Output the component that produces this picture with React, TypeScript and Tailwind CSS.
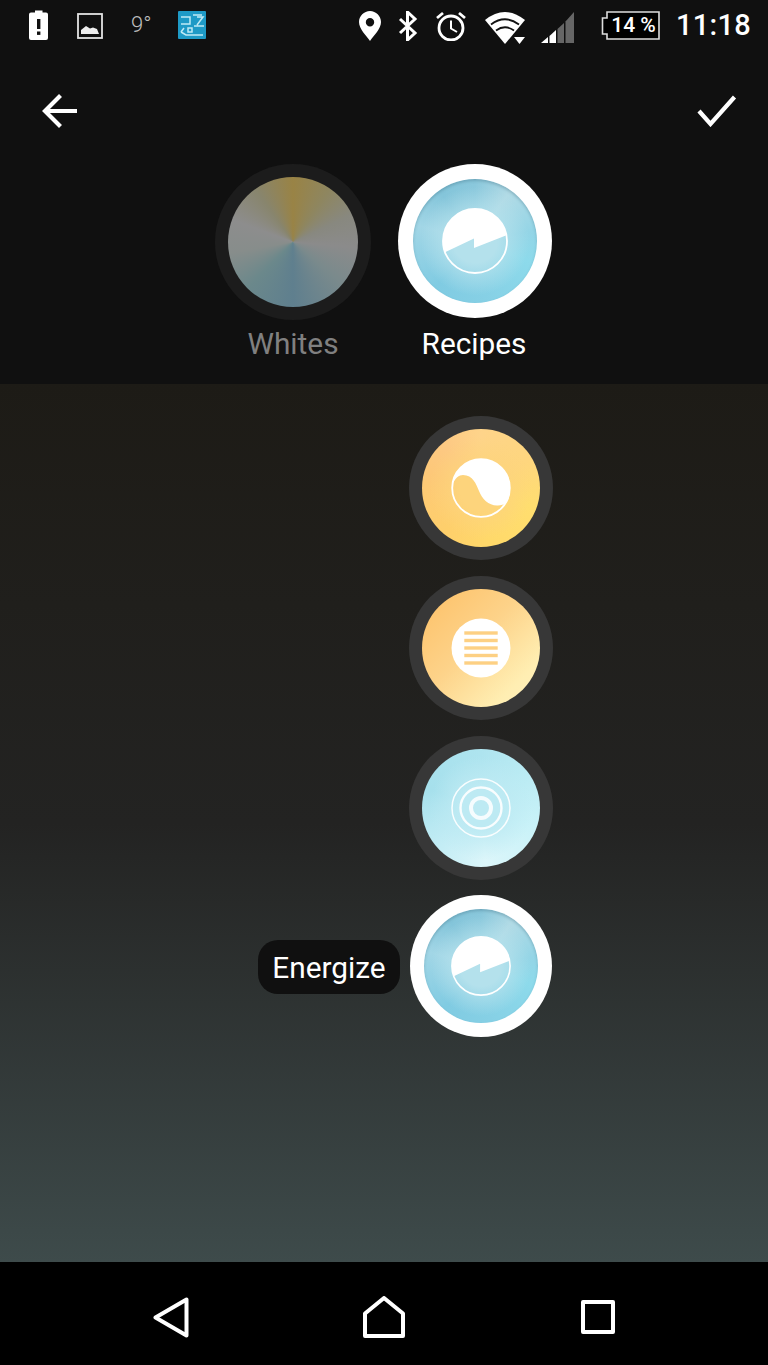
import React from 'react';

// glifos das receitas, desenhados num viewBox centrado em 0,0
const EnergizeGlyph = () => (
  <svg viewBox="-33 -33 66 66" className="w-full h-full">
    <circle cx="0" cy="0" r="32" fill="none" stroke="#fff" strokeWidth="1.8" />
    <path d="M-30 11.14 L-1 -2.5 L-1 7 L31.5 -5.64 A32 32 0 1 0 -30 11.14 Z" fill="#fff" />
  </svg>
);

const ConcentrateGlyph = () => (
  <svg viewBox="-30 -30 60 60" className="w-full h-full">
    <circle cx="0" cy="0" r="28.8" fill="none" stroke="#fff" strokeWidth="1.8" />
    <path
      d="M-28.84 -3.05 C-26 -10 -22 -13 -18 -13 C-8 -13 -5 -4 -2 3 C1 11 8 18 17 17.5 C20 17.3 23 16.5 25 14.7 A29 29 0 1 0 -28.84 -3.05 Z"
      fill="#fff"
    />
  </svg>
);

const ReadGlyph = () => (
  <svg viewBox="-30 -30 60 60" className="w-full h-full">
    <circle cx="0" cy="0" r="29.5" fill="#fff" />
    {[-16.7, -9.2, -1.7, 5.8, 13.3].map(y => (
      <rect key={y} x="-16.7" y={y} width="33.4" height="3.4" fill="#fdd083" />
    ))}
  </svg>
);

const RelaxGlyph = () => (
  <svg viewBox="-30 -30 60 60" className="w-full h-full" fill="none" stroke="#fff">
    <circle cx="0" cy="0" r="29" strokeWidth="1.5" strokeOpacity="0.9" />
    <circle cx="0" cy="0" r="20.5" strokeWidth="2.4" strokeOpacity="0.9" />
    <circle cx="0" cy="0" r="10" strokeWidth="4" strokeOpacity="0.85" />
  </svg>
);

const blueClass =
  'bg-[radial-gradient(circle,#b4e1ec_0%,#b4e1ec_25%,rgba(160,215,230,0)_62%),conic-gradient(from_0deg,#8ac8dc_0deg,#b2dbe6_35deg,#94d5e6_80deg,#8ddaeb_110deg,#86d0e5_170deg,#80cbe2_220deg,#a2d6e6_285deg,#84c5da_325deg,#8ac8dc_360deg)]';

interface RecipeCircleProps {
  selected?: boolean;
  gradient: string;
  glyph: React.ReactNode;
}

// botao redondo da lista de receitas
const RecipeCircle: React.FC<RecipeCircleProps> = ({ selected, gradient, glyph }) => (
  <div
    className={`rounded-full flex items-center justify-center shrink-0 ${
      selected ? 'w-[142px] h-[142px] bg-white' : 'w-[144px] h-[144px] bg-[#373737]'
    }`}
  >
    <div
      className={`rounded-full flex items-center justify-center ${gradient} ${
        selected ? 'w-[114px] h-[114px] shadow-[inset_0_2px_3px_rgba(60,110,130,0.35)]' : 'w-[118px] h-[118px]'
      }`}
    >
      <div className="w-[60px] h-[60px]">{glyph}</div>
    </div>
  </div>
);

const StatusBar = () => (
  <div className="h-[50px] flex items-start pt-[10px] relative shrink-0">
    <svg viewBox="0 0 20 30" className="w-[20px] h-[30px] ml-[29px]">
      <path d="M6 0.5 H13.5 V2.5 H17 Q19 2.5 19 4.5 V28 Q19 30 17 30 H2 Q0 30 0 28 V4.5 Q0 2.5 2 2.5 H6 Z" fill="#fff" />
      <rect x="8" y="9" width="3.4" height="10" fill="#111" />
      <rect x="8" y="21.5" width="3.4" height="3.4" fill="#111" />
    </svg>
    <svg viewBox="0 0 26 26" className="w-[26px] h-[26px] ml-[28px] mt-[3px]">
      <rect x="1" y="1" width="24" height="24" fill="none" stroke="#e4e4e4" strokeWidth="1.8" />
      <path d="M4 21 V17 L9 13 L13 15.5 L16 14.5 L20 16 L22 21 Z" fill="#eee" />
    </svg>
    <span className="ml-[28px] mt-[1px] w-[20px] text-[22px] leading-[28px] font-light text-[#bdbdbd] font-['Roboto',sans-serif]">
      9°
    </span>
    <svg viewBox="0 0 28 28" className="w-[28px] h-[28px] ml-[27px] mt-[1px]">
      <rect width="28" height="28" rx="1" fill="#1e9ac6" />
      <path
        d="M3 6 H12 V13 H3 M15 4 H24 M19 6 H25 L19 14 M3 21 L6 17 M3 21 L8 24 H25 M10 17 H14 V21 H10 Z M16 15 H26"
        fill="none"
        stroke="#bfeaf5"
        strokeWidth="1.5"
      />
    </svg>

    <svg viewBox="0 0 22 30" className="w-[22px] h-[30px] ml-[153px] mt-[1px]">
      <path
        fillRule="evenodd"
        d="M11 0 C17 0 22 5 22 11 C22 18 15 24 11 30 C7 24 0 18 0 11 C0 5 5 0 11 0 Z M11 7 A4.2 4.2 0 1 0 11 15.4 A4.2 4.2 0 1 0 11 7 Z"
        fill="#fff"
      />
    </svg>
    <svg viewBox="0 0 20 30" className="w-[20px] h-[30px] ml-[17px] mt-[1px]">
      <path d="M2 8 L17 22 L9.5 29 V1 L17 8 L2 22" fill="none" stroke="#fff" strokeWidth="3" />
    </svg>
    <svg viewBox="0 0 32 30" className="w-[32px] h-[30px] ml-[17px] mt-[1px]">
      <circle cx="16" cy="17" r="12" fill="none" stroke="#fff" strokeWidth="2.8" />
      <path d="M16 9.5 V17.5 L22 21" fill="none" stroke="#fff" strokeWidth="2" />
      <path d="M2 7 L8 2 M30 7 L24 2" stroke="#fff" strokeWidth="2.8" />
    </svg>
    <svg viewBox="0 0 42 34" className="w-[42px] h-[34px] ml-[18px] mt-[1px]">
      <path d="M0 9 Q20 -7 40 9 L20 33 Z" fill="#fff" />
      <path d="M6 13.5 Q20 3 34 13.5 M11 19.5 Q20 13 29 19.5" fill="none" stroke="#111" strokeWidth="1.8" />
      <path d="M29 26 H40 L34.5 33 Z" fill="#fff" />
    </svg>
    <svg viewBox="0 0 33 33" className="w-[33px] h-[33px] ml-[14px] mt-[1px]">
      <path d="M0 32 L7 26 V32 Z" fill="#fff" />
      <path d="M8.5 25 L15 19 V32 H8.5 Z" fill="#fff" />
      <path d="M16.5 18 L23 12 V32 H16.5 Z" fill="#666" />
      <path d="M24.5 10.5 L33 1 V32 H24.5 Z" fill="#666" />
    </svg>

    <div className="ml-[27px] mt-[1px] relative w-[59px] h-[29px]">
      <svg viewBox="0 0 59 29" className="w-[59px] h-[29px]">
        <path d="M6 1 H58 V28 H6 V23 H1.5 V7 H6 Z" fill="#000" stroke="#ddd" strokeWidth="1.6" />
      </svg>
      <span className="absolute inset-0 pl-[6px] flex items-center justify-center text-[21px] font-medium text-white font-['Roboto',sans-serif]">
        14 %
      </span>
    </div>
    <span className="ml-[16px] -mt-[1px] text-[29px] leading-[32px] font-medium text-white tracking-[0.3px] font-['Roboto',sans-serif]">
      11:18
    </span>
  </div>
);

export default function App() {
  return (
    <div className="w-[768px] h-[1365px] flex flex-col overflow-hidden bg-[#101010] font-['Roboto',sans-serif]">
      <StatusBar />

      {/* Barra de acao */}
      <div className="h-[114px] shrink-0 flex items-start justify-between pl-[42px] pr-[31px] pt-[43px]">
        <svg viewBox="0 0 36 36" className="w-[36px] h-[36px]">
          <path d="M35 18 H4 M18.5 2.5 L3 18 L18.5 33.5" fill="none" stroke="#fff" strokeWidth="4.2" />
        </svg>
        <svg viewBox="0 0 40 32" className="w-[40px] h-[32px] mt-[2px]">
          <path d="M2 16 L13.5 29 L37.5 2" fill="none" stroke="#fff" strokeWidth="4.2" />
        </svg>
      </div>

      {/* Seletor Whites / Recipes */}
      <div className="h-[220px] shrink-0 flex items-start pl-[215px]">
        <div className="w-[156px] flex flex-col items-center">
          <div className="w-[156px] h-[156px] rounded-full bg-[#1c1c1c] flex items-center justify-center">
            <div className="w-[130px] h-[130px] rounded-full bg-[conic-gradient(from_0deg,#998345_0deg,#8e8660_35deg,#88887f_65deg,#8b8b8b_95deg,#7a8a8c_130deg,#5f7f8e_180deg,#6b888b_225deg,#878d8b_260deg,#8d8d8d_290deg,#88856d_325deg,#998345_360deg)]" />
          </div>
          <span className="mt-[6px] text-[29.8px] leading-[36px] text-[#808080]">Whites</span>
        </div>
        <div className="w-[154px] ml-[27px] flex flex-col items-center">
          <div className="w-[154px] h-[154px] rounded-full bg-white flex items-center justify-center">
            <div
              className={`w-[124px] h-[124px] rounded-full flex items-center justify-center shadow-[inset_0_2px_3px_rgba(60,110,130,0.35)] ${blueClass}`}
            >
              <div className="w-[66px] h-[66px]">
                <EnergizeGlyph />
              </div>
            </div>
          </div>
          <span className="mt-[8px] -ml-[2px] text-[29.8px] leading-[36px] text-white">Recipes</span>
        </div>
      </div>

      {/* Lista de receitas */}
      <div className="flex-1 flex flex-col items-end gap-4 pt-[32px] pr-[215px] bg-gradient-to-b from-[#1d1b16] via-[#232322] via-50% to-[#3e4b4b]">
        <RecipeCircle
          gradient="bg-[radial-gradient(circle,#fdd47c_0%,#fdd47c_25%,rgba(253,212,124,0)_62%),conic-gradient(from_0deg,#fed48a_0deg,#fed67e_60deg,#ffde6f_110deg,#ffd96a_170deg,#fecf6b_220deg,#fdc878_285deg,#fdc983_320deg,#fed48a_360deg)]"
          glyph={<ConcentrateGlyph />}
        />
        <RecipeCircle
          gradient="bg-[linear-gradient(135deg,#fdc672_15%,#fdd38a_45%,#ffeeb2_80%,#fff1bd_100%)]"
          glyph={<ReadGlyph />}
        />
        <RecipeCircle
          gradient="bg-[radial-gradient(circle,#bdeaf3_0%,#bdeaf3_25%,rgba(189,234,243,0)_62%),conic-gradient(from_0deg,#aee4ef_0deg,#bcecf4_60deg,#c9f2f8_110deg,#dcf6fa_175deg,#c4edf5_225deg,#a6e0ec_290deg,#aee4ef_360deg)]"
          glyph={<RelaxGlyph />}
        />
        <div className="flex items-center gap-[10px] mr-px -mt-px">
          <div className="h-[54px] w-[142px] mt-[2px] pt-[2px] rounded-[20px] bg-[#101010] flex items-center justify-center text-[29.8px] text-white">
            Energize
          </div>
          <RecipeCircle selected gradient={blueClass} glyph={<EnergizeGlyph />} />
        </div>
      </div>

      {/* Navegacao */}
      <div className="h-[103px] shrink-0 bg-black flex items-center pl-[153px] pt-[7px]">
        <svg viewBox="0 0 36 41" className="w-[36px] h-[41px]">
          <path d="M33.5 2.5 V38.5 L2.5 20.5 Z" fill="none" stroke="#fff" strokeWidth="4" strokeLinejoin="round" />
        </svg>
        <svg viewBox="0 0 42 42" className="w-[42px] h-[42px] ml-[174px]">
          <path d="M2 40 V17.5 L21 2 L40 17.5 V40 Z" fill="none" stroke="#fff" strokeWidth="4" strokeLinejoin="round" />
        </svg>
        <svg viewBox="0 0 34 34" className="w-[34px] h-[34px] ml-[176px]">
          <rect x="2" y="2" width="30" height="30" fill="none" stroke="#fff" strokeWidth="4" strokeLinejoin="round" />
        </svg>
      </div>
    </div>
  );
}
